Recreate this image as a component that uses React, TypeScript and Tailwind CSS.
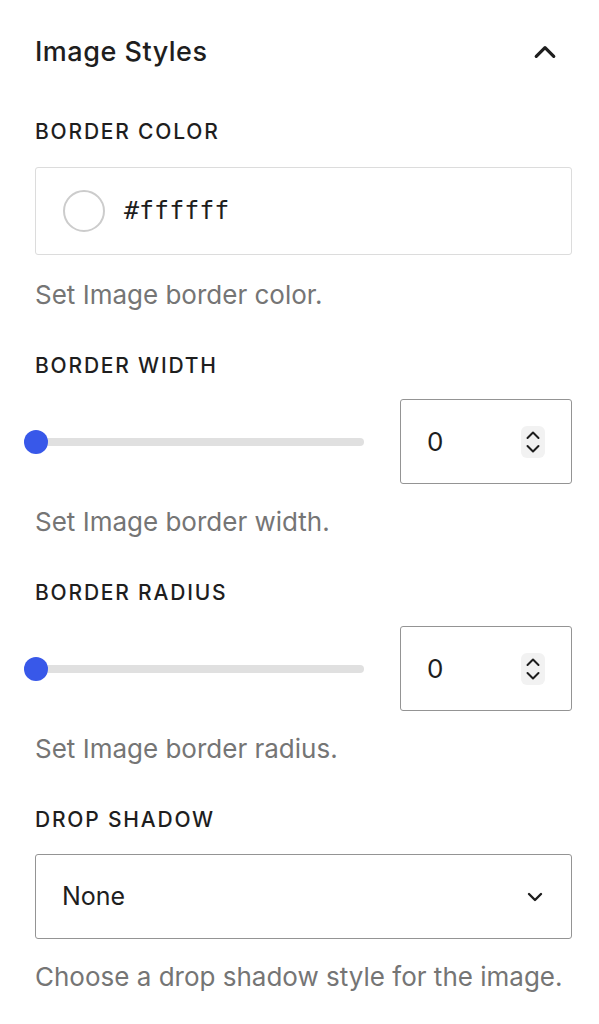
import React from 'react';

const font = { fontFamily: 'Inter, "Noto Sans", sans-serif' };

const ChevronUp = ({ className = '' }: { className?: string }) => (
  <svg viewBox="0 0 24 24" className={className} fill="none" stroke="currentColor" strokeWidth={2.6} strokeLinecap="round" strokeLinejoin="round">
    <path d="M5 15.5l7-7 7 7" />
  </svg>
);

const ChevronDown = ({ className = '' }: { className?: string }) => (
  <svg viewBox="0 0 24 24" className={className} fill="none" stroke="currentColor" strokeWidth={2.4} strokeLinecap="round" strokeLinejoin="round">
    <path d="M6 9l6 6 6-6" />
  </svg>
);

const Spinner = () => (
  <div className="w-[24px] h-[32px] rounded-[6px] bg-[#f2f2f2] flex items-center justify-center">
    <svg viewBox="0 0 24 32" className="w-[24px] h-[32px]" fill="none" stroke="#1e1e1e" strokeWidth={2} strokeLinecap="round" strokeLinejoin="round">
      <path d="M6.5 12l5.5-5.5 5.5 5.5" />
      <path d="M6.5 20l5.5 5.5 5.5-5.5" />
    </svg>
  </div>
);

const Label = ({ children }: { children: React.ReactNode }) => (
  <div className="text-[21px] leading-[24px] font-medium uppercase text-[#1e1e1e] tracking-[1.8px]">{children}</div>
);

const Help = ({ children }: { children: React.ReactNode }) => (
  <p className="text-[26px] leading-[30px] text-[#757575]">{children}</p>
);

const RangeRow = () => (
  <div className="flex items-center mt-[21px]">
    <div className="relative flex-1 h-[24px] flex items-center mr-[36px]">
      <div className="w-full h-[8px] rounded-full bg-[#e0e0e0]" />
      <div className="absolute left-[-11px] top-0 w-[24px] h-[24px] rounded-full bg-[#3858e9]" />
    </div>
    <div className="w-[172px] h-[85px] border border-[#949494] rounded-[3px] flex items-center justify-between pl-[26px] pr-[26px]">
      <span className="text-[26px] text-[#1e1e1e]">0</span>
      <Spinner />
    </div>
  </div>
);

export default function App() {
  return (
    <div className="min-h-screen bg-white text-[#1e1e1e] pl-[35px] pr-[27px] pt-[36px]" style={font}>
      <div className="flex items-center justify-between h-[32px]">
        <h2 className="text-[27px] leading-[32px] font-medium tracking-[0.5px]">Image Styles</h2>
        <ChevronUp className="w-[30px] h-[30px] mr-[12px]" />
      </div>

      <div className="mt-[52px]">
        <Label>Border Color</Label>
        <div className="mt-[23px] h-[88px] border border-[#dcdcdc] rounded-[3px] flex items-center pl-[27px]">
          <div className="w-[42px] h-[42px] rounded-full border-[2px] border-[#cccccc] bg-white" />
          <span className="ml-[19px] text-[25px] text-[#1e1e1e]" style={{ fontFamily: '"DejaVu Sans Mono", "Liberation Mono", monospace' }}>#ffffff</span>
        </div>
        <div className="mt-[25px]">
          <Help>Set Image border color.</Help>
        </div>
      </div>

      <div className="mt-[44px]">
        <Label>Border Width</Label>
        <RangeRow />
        <div className="mt-[23px]">
          <Help>Set Image border width.</Help>
        </div>
      </div>

      <div className="mt-[44px]">
        <Label>Border Radius</Label>
        <RangeRow />
        <div className="mt-[23px]">
          <Help>Set Image border radius.</Help>
        </div>
      </div>

      <div className="mt-[44px]">
        <Label>Drop Shadow</Label>
        <div className="mt-[22px] h-[85px] border border-[#949494] rounded-[3px] flex items-center justify-between pl-[26px] pr-[24px]">
          <span className="text-[25px] text-[#1e1e1e]">None</span>
          <ChevronDown className="w-[24px] h-[24px]" />
        </div>
        <div className="mt-[23px]">
          <Help>Choose a drop shadow style for the image.</Help>
        </div>
      </div>
    </div>
  );
}
